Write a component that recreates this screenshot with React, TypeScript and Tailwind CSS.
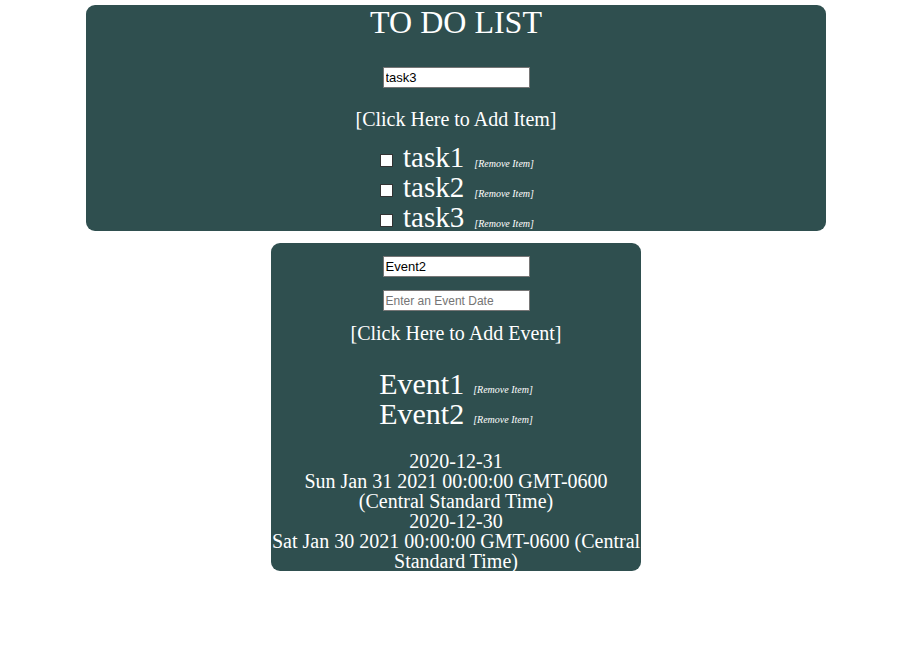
export default function App() {
  const tasks = ["task1", "task2", "task3"];
  const events = ["Event1", "Event2"];
  const field =
    "shrink-0 block w-[147px] h-[21px] bg-white text-black border border-[#767676] px-[2px] py-0 font-['Liberation_Sans',Arial,sans-serif]";
  return (
    <div className="w-[912px] flex flex-col items-center pt-[5px] text-white font-['Liberation_Serif',serif]">
      <div className="w-[740px] h-[226px] bg-[#2f4f4f] rounded-[9px] flex flex-col items-center">
        <h1 className="shrink-0 text-[32px] leading-[32px] mt-[1px]">TO DO LIST</h1>
        <input defaultValue="task3" className={`${field} mt-[29px] text-[13px]`} />
        <div className="shrink-0 mt-[19px] text-[20px] leading-[24px]">[Click Here to Add Item]</div>
        <ul className="shrink-0 mt-[11px] flex flex-col">
          {tasks.map((t) => (
            <li key={t} className="flex items-end h-[30px] pl-[2px]">
              <span className="w-[13px] h-[13px] bg-white border border-[#333] mb-[5px] mr-[10px]" />
              <span className="text-[29px] leading-[30px]">{t}</span>
              <span className="text-[10px] italic ml-[10px] mb-[1px]">[Remove Item]</span>
            </li>
          ))}
        </ul>
      </div>

      <div className="mt-[12px] w-[370px] h-[328px] bg-[#2f4f4f] rounded-[9px] flex flex-col items-center">
        <input defaultValue="Event2" className={`${field} mt-[13px] text-[13px]`} />
        <input
          placeholder="Enter an Event Date"
          className={`${field} mt-[13px] text-[12px] placeholder:text-[#757575]`}
        />
        <div className="shrink-0 mt-[10px] text-[20px] leading-[24px]">[Click Here to Add Event]</div>
        <ul className="shrink-0 mt-[24px] flex flex-col">
          {events.map((e) => (
            <li key={e} className="flex items-end h-[30px]">
              <span className="text-[30px] leading-[30px]">{e}</span>
              <span className="text-[10px] italic ml-[9px] mb-[2px]">[Remove Item]</span>
            </li>
          ))}
        </ul>
        <div className="shrink-0 mt-[22px] text-[20px] leading-[20px] text-center">
          <div>2020-12-31</div>
          <div>Sun Jan 31 2021 00:00:00 GMT-0600 (Central Standard Time)</div>
          <div>2020-12-30</div>
          <div>Sat Jan 30 2021 00:00:00 GMT-0600 (Central Standard Time)</div>
        </div>
      </div>
    </div>
  );
}
